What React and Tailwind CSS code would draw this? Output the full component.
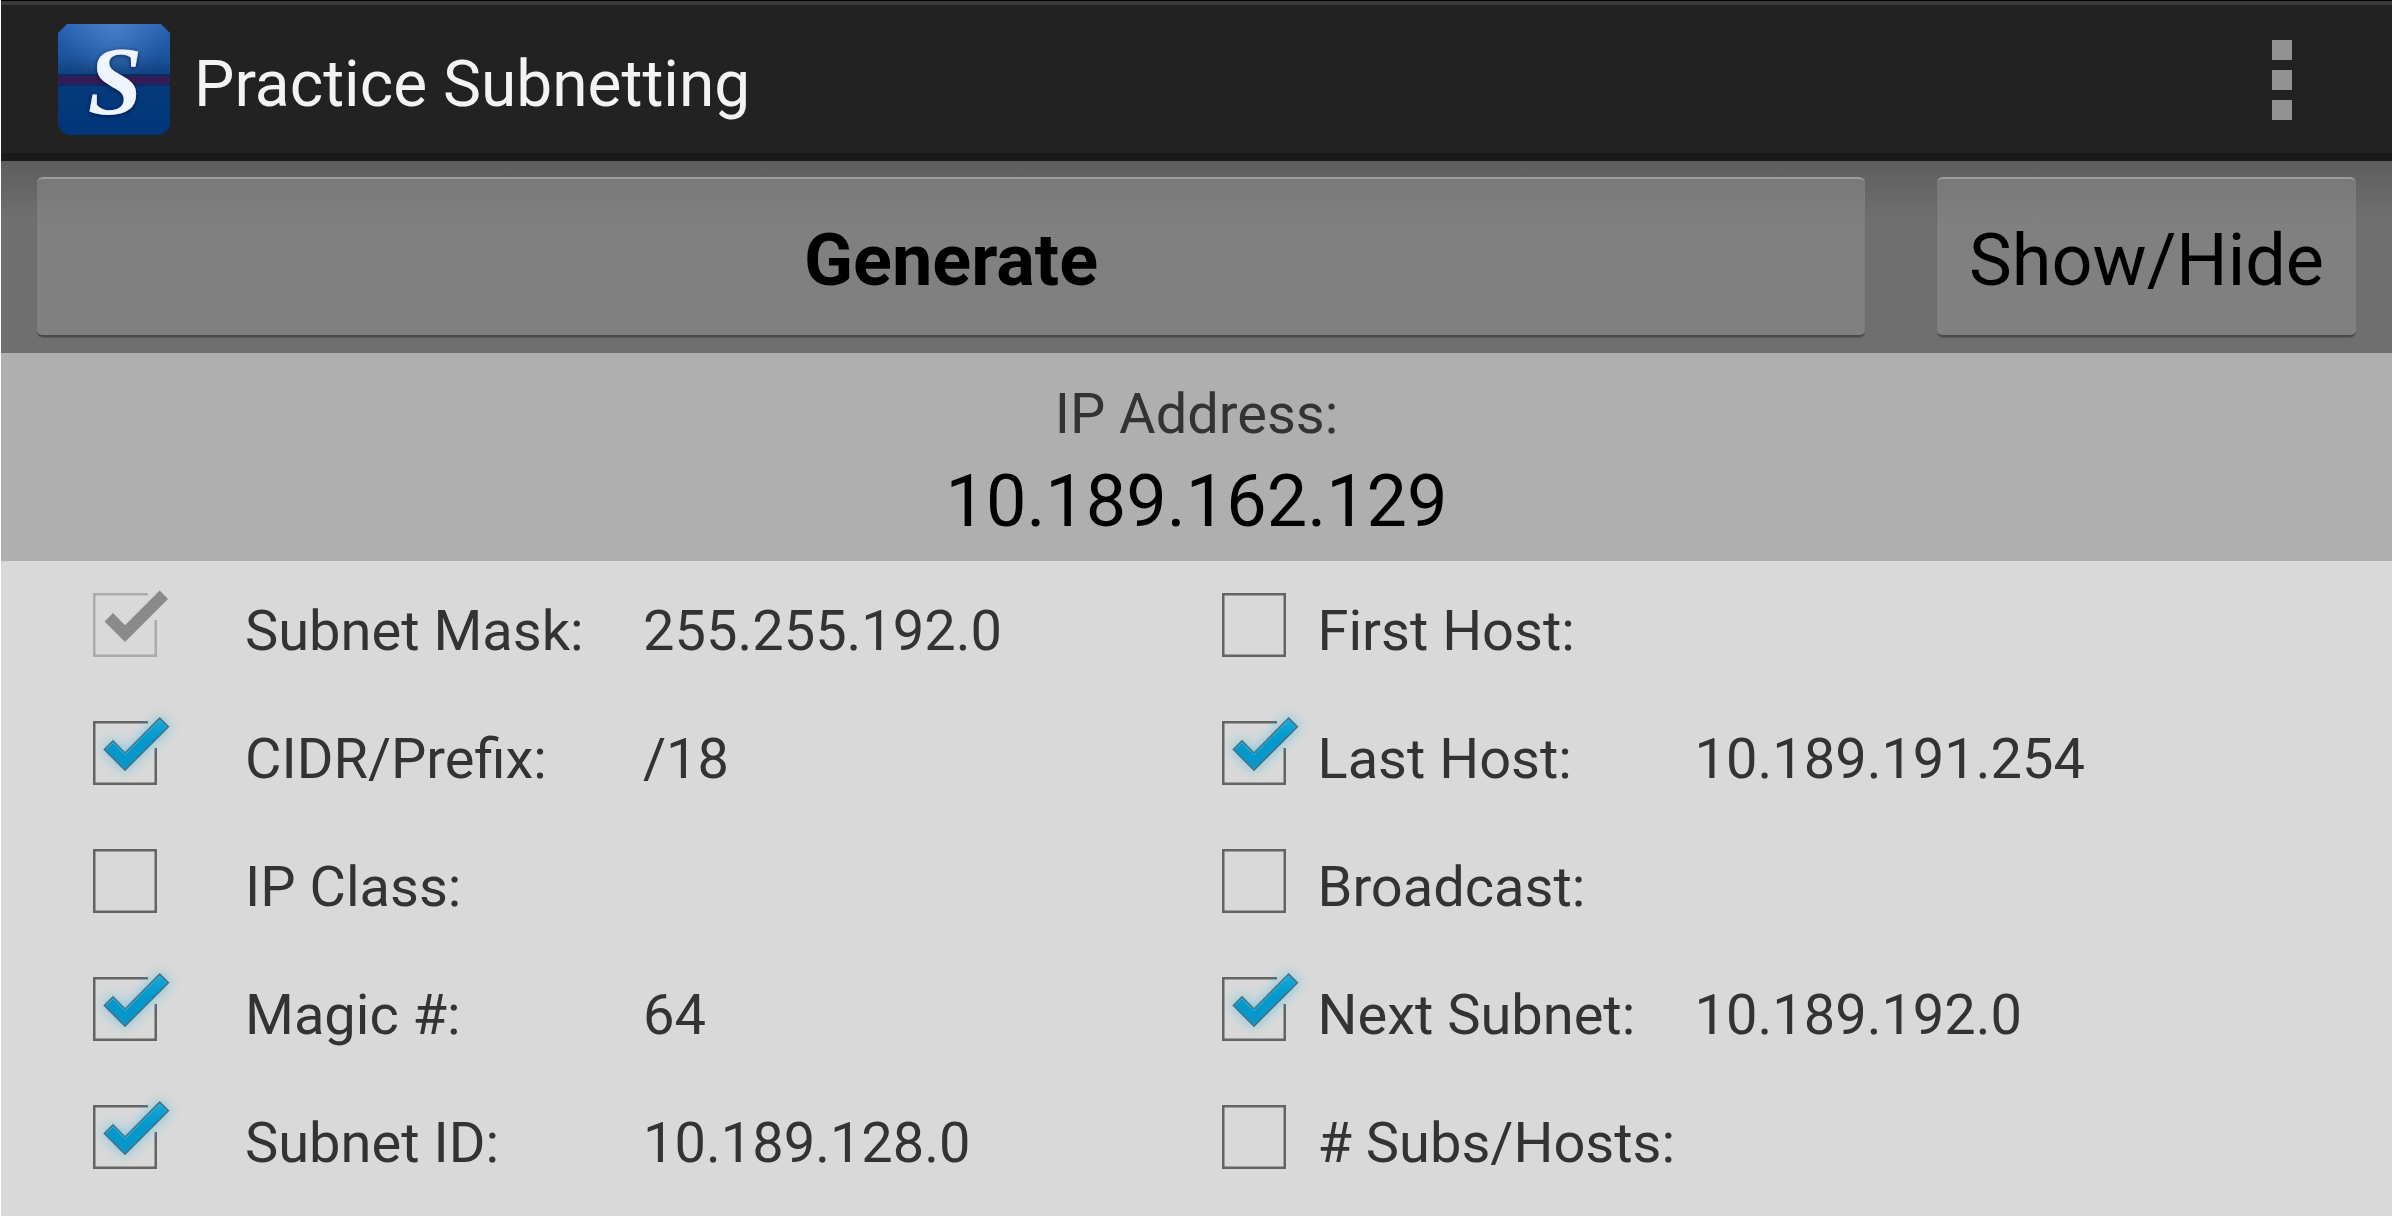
import { useState } from "react";

const LEFT = [
  { id: "mask", label: "Subnet Mask:", value: "255.255.192.0", checked: true, disabled: true },
  { id: "cidr", label: "CIDR/Prefix:", value: "/18", checked: true },
  { id: "class", label: "IP Class:", value: "", checked: false },
  { id: "magic", label: "Magic #:", value: "64", checked: true },
  { id: "subnet", label: "Subnet ID:", value: "10.189.128.0", checked: true },
];

const RIGHT = [
  { id: "first", label: "First Host:", value: "", checked: false },
  { id: "last", label: "Last Host:", value: "10.189.191.254", checked: true },
  { id: "broadcast", label: "Broadcast:", value: "", checked: false },
  { id: "next", label: "Next Subnet:", value: "10.189.192.0", checked: true },
  { id: "hosts", label: "# Subs/Hosts:", value: "", checked: false },
];

function AppIcon() {
  return (
    <svg viewBox="0 0 112 112" className="size-28 shrink-0" aria-hidden="true">
      <defs>
        <linearGradient id="tile" x1="0" y1="0" x2="0" y2="1">
          <stop offset="0" stopColor="#2a62b4" />
          <stop offset="0.3" stopColor="#1b529b" />
          <stop offset="0.46" stopColor="#10417f" />
          <stop offset="0.56" stopColor="#063a7c" />
          <stop offset="1" stopColor="#00367a" />
        </linearGradient>
        <radialGradient id="gloss" cx="0.5" cy="0" r="0.5">
          <stop offset="0" stopColor="#5a8fd4" stopOpacity="0.65" />
          <stop offset="1" stopColor="#5a8fd4" stopOpacity="0" />
        </radialGradient>
        <filter id="soft" x="-20%" y="-20%" width="140%" height="140%">
          <feDropShadow dx="0" dy="1" stdDeviation="2" floodColor="#00132f" floodOpacity="0.7" />
        </filter>
        <clipPath id="round">
          <path d="M9 0H103L112 9V101Q109 109 101 111H11Q3 109 0 101V9Z" />
        </clipPath>
      </defs>
      <g clipPath="url(#round)">
        <rect width="112" height="112" fill="url(#tile)" />
        <rect width="112" height="112" fill="url(#gloss)" />
        <rect y="50" width="112" height="12" fill="#0b2c60" />
        <rect y="52" width="112" height="8" fill="#341c58" />
      </g>
      <text
        x="57"
        y="90"
        textAnchor="middle"
        fontFamily="'Liberation Serif', serif"
        fontWeight="700"
        fontStyle="italic"
        fontSize="98"
        fill="#eef5ff"
        filter="url(#soft)"
      >
        S
      </text>
    </svg>
  );
}

function BoxMark({ checked, disabled }) {
  const line = disabled ? "#ababab" : "#646464";
  return (
    <svg viewBox="0 0 64 64" className="pointer-events-none absolute inset-0 size-16 overflow-visible" aria-hidden="true">
      <defs>
        <linearGradient id="tick" x1="0" y1="0" x2="0" y2="1">
          <stop offset="0" stopColor="#1fa9da" />
          <stop offset="0.4" stopColor="#0099cc" />
          <stop offset="1" stopColor="#0a96c8" />
        </linearGradient>
        <filter id="glow" x="-40%" y="-40%" width="180%" height="180%">
          <feGaussianBlur stdDeviation="6" />
        </filter>
      </defs>
      {checked ? (
        <path d="M55 1.25H1.25V62.75H62.75V27" fill="none" stroke={line} strokeWidth="2.5" />
      ) : (
        <rect x="1.25" y="1.25" width="61.5" height="61.5" fill="none" stroke={line} strokeWidth="2.5" />
      )}
      {checked && disabled && <path d="M66.7 -2.5L75 6L32 49L11.5 28.5L20 20L32 32.3Z" fill="#8a8a8a" />}
      {checked && !disabled && (
        <>
          <path d="M66.7 -3.5L76 5.7L32 49.7L10.8 28.5L20 19.3L32 31.5Z" fill="#33b5e5" opacity="0.5" stroke="#33b5e5" strokeWidth="3" filter="url(#glow)" />
          <path d="M66.7 -3L75.5 5.7L32 49.2L11.3 28.5L20 19.8L32 32Z" fill="url(#tick)" stroke="#4f6d7a" strokeWidth="1.4" />
          <path d="M13.4 28.3L20 21.7L32 33.7L66.7 -1" fill="none" stroke="#3fb2da" strokeWidth="1" />
        </>
      )}
    </svg>
  );
}

function Row({ item, labelWidth, gap }) {
  const [checked, setChecked] = useState(item.checked);
  return (
    <div className="flex h-32 items-center text-[56px] leading-16 text-[#333333]">
      <span className="relative size-16 shrink-0">
        <input
          id={item.id}
          type="checkbox"
          checked={checked}
          disabled={item.disabled}
          onChange={(e) => setChecked(e.target.checked)}
          className="block size-16 appearance-none"
        />
        <BoxMark checked={checked} disabled={item.disabled} />
      </span>
      <label htmlFor={item.id} className={`shrink-0 whitespace-nowrap pt-3 ${gap} ${labelWidth}`}>
        {item.label}
      </label>
      <output htmlFor={item.id} className="whitespace-nowrap pt-3">
        {checked ? item.value : ""}
      </output>
    </div>
  );
}

const BUTTON =
  "h-40 rounded-md border-t-2 border-b-2 border-t-[#9c9c9c] border-b-[#4a4a4a] bg-linear-to-b from-[#797979] to-[#808080] to-30% pt-2 text-[72px] leading-none text-black shadow-[0_1px_1px_#5c5c5c]";

export default function App() {
  return (
    <div className="min-h-screen border-l border-white bg-[#d9d9d9] font-[Roboto,sans-serif]">
      <header className="flex h-[161px] items-center justify-between border-t border-b-8 border-t-black border-b-[#1a1a1a] bg-[#222222] pr-[100px] pl-[57px] pt-1.5 shadow-[inset_0_4px_0_#3b3a3c]">
        <div className="flex items-center gap-6">
          <AppIcon />
          <h1 className="pt-2.5 text-[64px] leading-20 text-[#f3f3f3]">Practice Subnetting</h1>
        </div>
        <button type="button" aria-label="More options" className="flex flex-col gap-2.5">
          <span className="size-5 bg-[#929292]" />
          <span className="size-5 bg-[#929292]" />
          <span className="size-5 bg-[#929292]" />
        </button>
      </header>

      <div className="flex gap-18 bg-linear-to-b from-[#5e5e5e] to-[#6f6f6f] to-30% px-9 py-4">
        <button type="button" className={`${BUTTON} flex-1 font-bold`}>
          Generate
        </button>
        <button type="button" className={`${BUTTON} px-8`}>
          Show/Hide
        </button>
      </div>

      <section className="bg-[#afafaf] pt-[21px] pb-[11px] text-center">
        <h2 className="text-[56px] leading-20 text-[#333333]">IP Address:</h2>
        <p className="text-[72px] leading-24 text-black">10.189.162.129</p>
      </section>

      <main className="grid grid-cols-2">
        <div className="pl-[92px]">
          {LEFT.map((item) => (
            <Row key={item.id} item={item} gap="pl-22" labelWidth="w-[486px]" />
          ))}
        </div>
        <div className="pl-[25px]">
          {RIGHT.map((item) => (
            <Row key={item.id} item={item} gap="pl-8" labelWidth="w-[409px]" />
          ))}
        </div>
      </main>
    </div>
  );
}
